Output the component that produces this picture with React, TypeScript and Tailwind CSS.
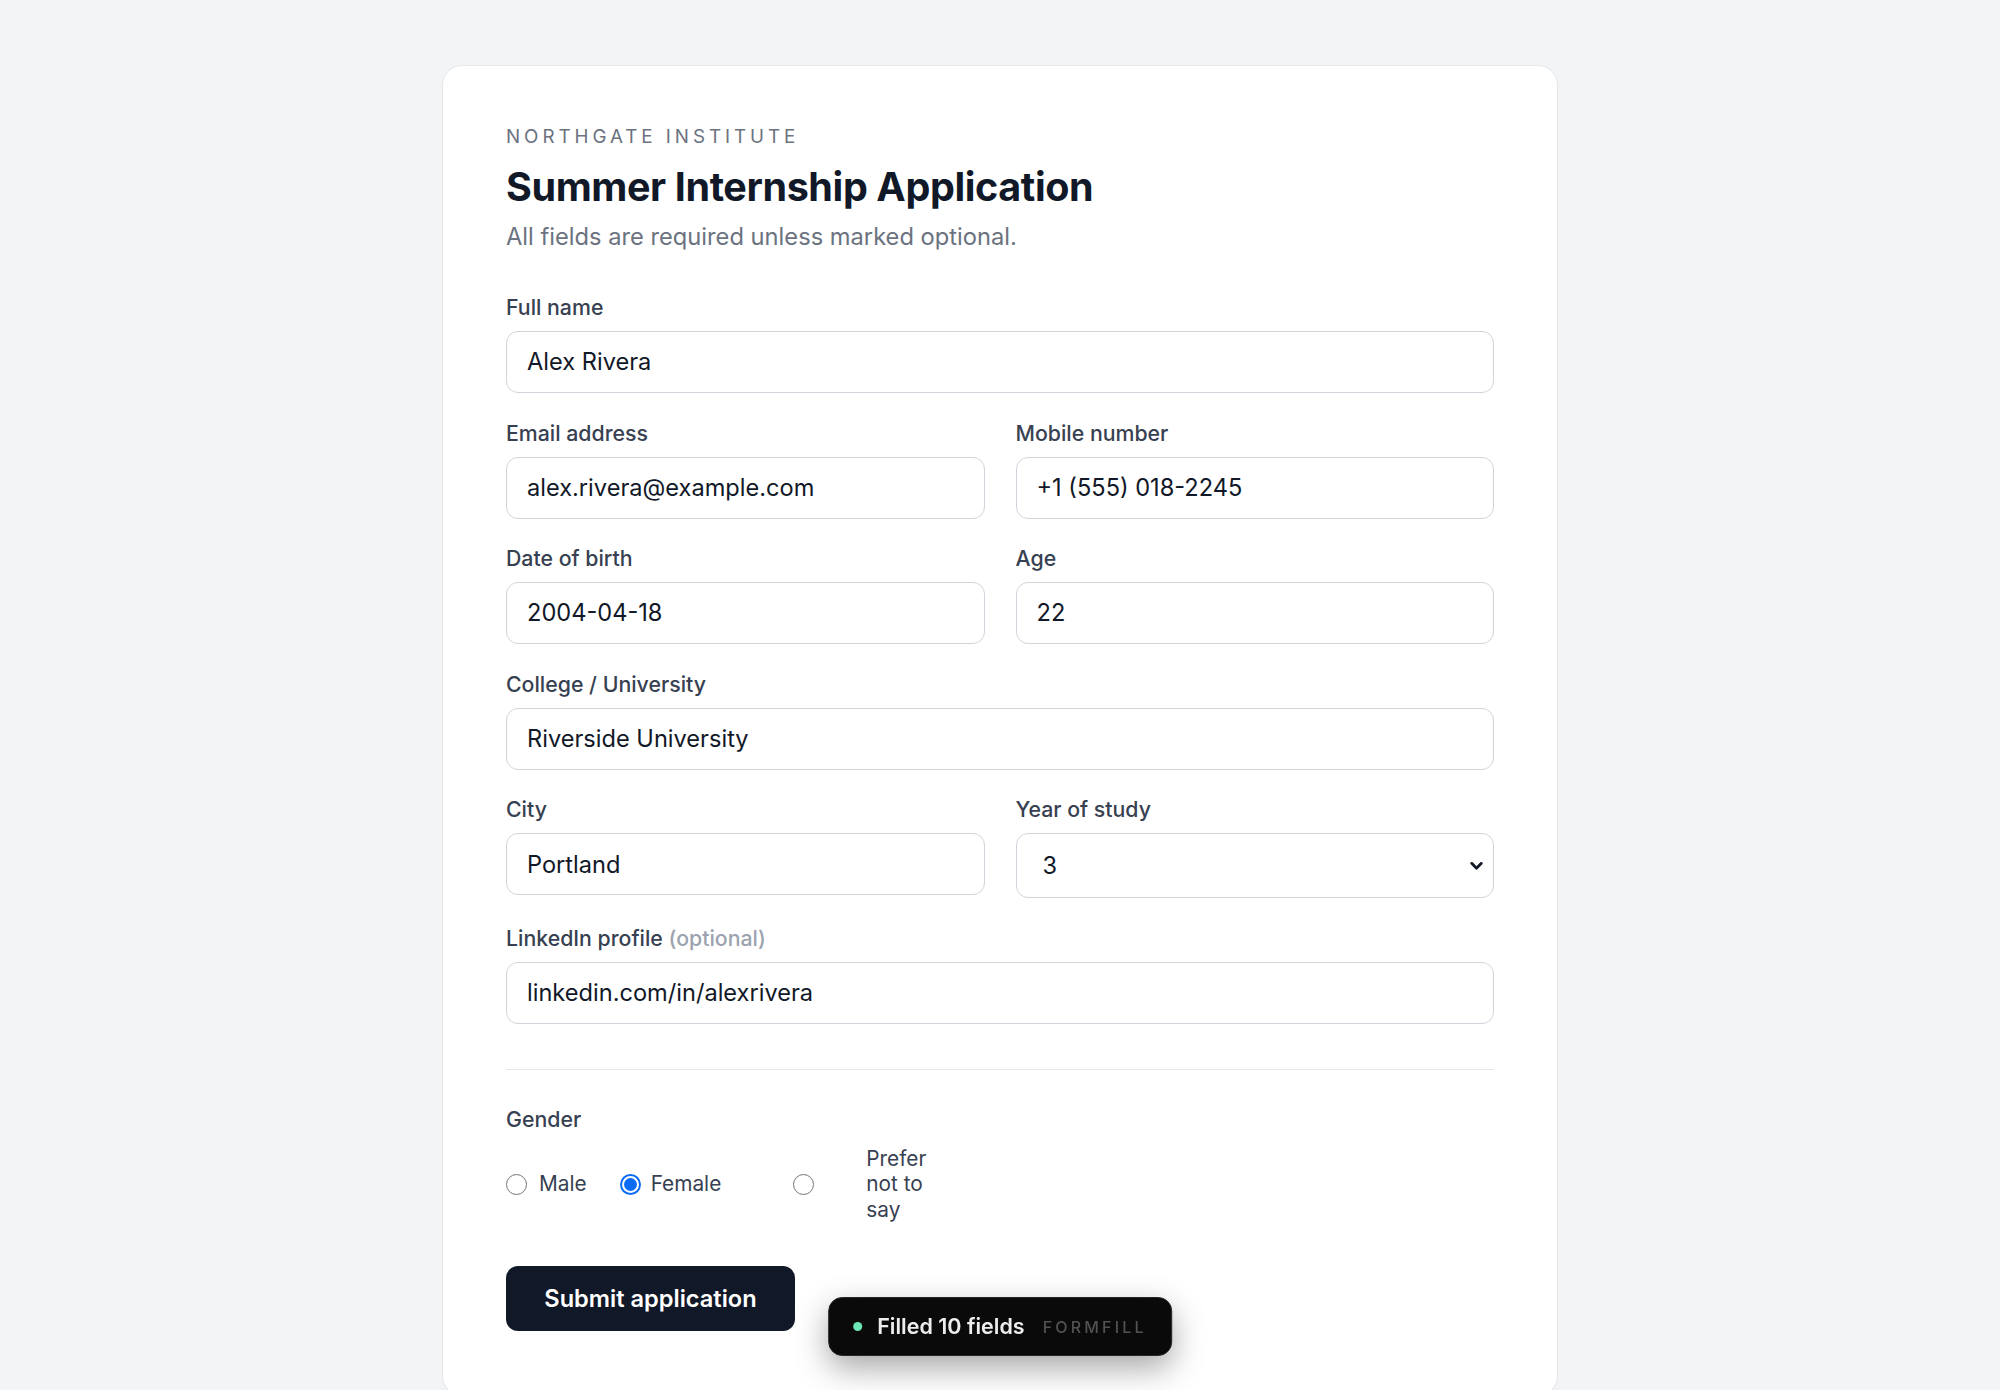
import React from "react";

const font = { fontFamily: "Inter, 'Noto Sans', sans-serif" };

function Label({ children }: { children: React.ReactNode }) {
  return <label className="block text-[21.3px] leading-[27px] font-medium text-[#374151] mb-[10px]">{children}</label>;
}

function Input({ value }: { value: string }) {
  return (
    <div className="h-[62px] w-full rounded-[12px] border border-[#d1d5db] bg-white px-[20px] flex items-center text-[23.6px] text-[#111827]">
      {value}
    </div>
  );
}

function Field({ label, value }: { label: React.ReactNode; value: string }) {
  return (
    <div className="flex flex-col">
      <Label>{label}</Label>
      <Input value={value} />
    </div>
  );
}

function Radio({ checked }: { checked?: boolean }) {
  return checked ? (
    <span className="w-[21px] h-[21px] rounded-full border-[2px] border-[#0b6bf5] flex items-center justify-center shrink-0">
      <span className="w-[13px] h-[13px] rounded-full bg-[#0b6bf5]" />
    </span>
  ) : (
    <span className="w-[21px] h-[21px] rounded-full border-[1.6px] border-[#767676] bg-white shrink-0" />
  );
}

export default function App() {
  return (
    <div className="min-h-screen bg-[#f3f4f6] pt-[65px] pb-[60px]" style={font}>
      <div className="mx-auto w-[1116px] rounded-[20px] border border-[#e5e7eb] bg-white pt-[58px] px-[63px] pb-[64px] shadow-[0_1px_2px_rgba(0,0,0,0.03)]">
        <div className="text-[18.8px] leading-[25px] tracking-[0.21em] text-[#6b7280]">NORTHGATE INSTITUTE</div>
        <h1 className="mt-[15px] text-[39.5px] leading-[47px] font-bold tracking-[-0.01em] text-[#111827]">
          Summer Internship Application
        </h1>
        <p className="mt-[10px] text-[23.7px] leading-[32px] text-[#6b7280]">All fields are required unless marked optional.</p>

        <div className="mt-[41px] flex flex-col gap-[26.6px]">
          <Field label="Full name" value="Alex Rivera" />
          <div className="grid grid-cols-2 gap-x-[31px]">
            <Field label="Email address" value="alex.rivera@example.com" />
            <Field label="Mobile number" value="+1 (555) 018-2245" />
          </div>
          <div className="grid grid-cols-2 gap-x-[31px]">
            <Field label="Date of birth" value="2004-04-18" />
            <Field label="Age" value="22" />
          </div>
          <Field label="College / University" value="Riverside University" />
          <div className="grid grid-cols-2 gap-x-[31px]">
            <Field label="City" value="Portland" />
            <div className="flex flex-col">
              <Label>Year of study</Label>
              <div className="h-[65px] w-full rounded-[12px] border border-[#d1d5db] bg-white pl-[26px] pr-[9px] flex items-center justify-between text-[23.6px] text-[#111827]">
                <span>3</span>
                <svg width="15" height="15" viewBox="0 0 14 14" fill="none">
                  <path d="M2.5 5l4.5 4.5L11.5 5" stroke="#111827" strokeWidth="2.6" strokeLinecap="round" strokeLinejoin="round" />
                </svg>
              </div>
            </div>
          </div>
          <Field
            label={
              <>
                LinkedIn profile <span className="text-[#9ca3af]">(optional)</span>
              </>
            }
            value="linkedin.com/in/alexrivera"
          />
        </div>

        <div className="mt-[45px] border-t border-[#e5e7eb]" />

        <div className="mt-[36px] text-[21.3px] leading-[27px] font-medium text-[#374151]">Gender</div>
        <div className="mt-[13px] flex items-center text-[20.8px] leading-[25.5px] text-[#374151]">
          <div className="flex items-center gap-[12px]">
            <Radio />
            <span>Male</span>
          </div>
          <div className="ml-[33px] flex items-center gap-[10px]">
            <Radio checked />
            <span>Female</span>
          </div>
          <div className="ml-[72px] flex items-center gap-[52px]">
            <Radio />
            <span className="w-[66px]">Prefer not to say</span>
          </div>
        </div>

        <button className="mt-[44px] h-[65px] w-[289px] rounded-[12px] bg-[#111827] text-[23.6px] font-semibold text-white">
          Submit application
        </button>
      </div>

      <div className="fixed bottom-[34px] left-1/2 -translate-x-1/2 h-[59px] rounded-[14px] border border-[#262626] bg-[#0a0a0a] pl-[24px] pr-[24px] flex items-center shadow-[0_12px_32px_rgba(0,0,0,0.35)]">
        <span className="w-[9px] h-[9px] rounded-full bg-[#6ee7b7]" />
        <span className="ml-[15px] text-[21.5px] font-semibold text-[#ededed]">Filled 10 fields</span>
        <span className="ml-[18px] text-[16px] font-medium tracking-[0.2em] text-[#525252]">FORMFILL</span>
      </div>
    </div>
  );
}
